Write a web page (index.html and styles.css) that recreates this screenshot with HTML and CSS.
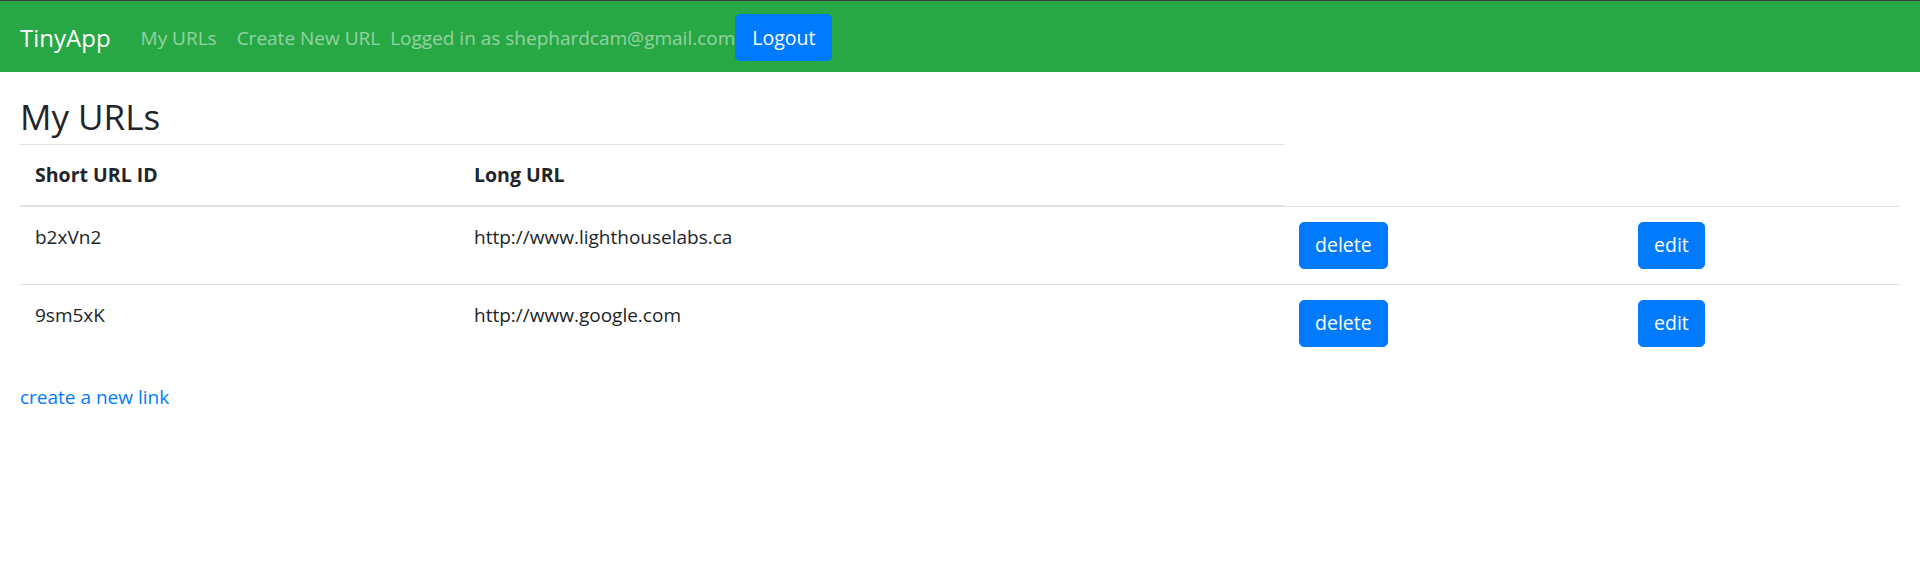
FILE: index.html
```html
<!DOCTYPE html>
<html lang="en">
<head>
<meta charset="utf-8">
<title>TinyApp</title>
<link rel="stylesheet" href="styles.css">
</head>
<body>
<nav class="navbar">
  <a class="brand" href="#">TinyApp</a>
  <div class="nav-links">
    <a class="nav-link" href="#">My URLs</a>
    <a class="nav-link" href="#">Create New URL</a>
  </div>
  <span class="nav-text">Logged in as shephardcam@gmail.com</span>
  <button class="btn">Logout</button>
</nav>
<main class="container">
  <h2 class="title">My URLs</h2>
  <table class="table">
    <colgroup>
      <col class="c1"><col class="c2"><col class="c3"><col class="c4">
    </colgroup>
    <thead>
      <tr><th>Short URL ID</th><th>Long URL</th></tr>
    </thead>
    <tbody>
      <tr>
        <td>b2xVn2</td>
        <td>http://www.lighthouselabs.ca</td>
        <td><button class="btn">delete</button></td>
        <td><button class="btn">edit</button></td>
      </tr>
      <tr>
        <td>9sm5xK</td>
        <td>http://www.google.com</td>
        <td><button class="btn">delete</button></td>
        <td><button class="btn">edit</button></td>
      </tr>
    </tbody>
  </table>
  <a class="link" href="#">create a new link</a>
</main>
</body>
</html>
```
FILE: styles.css
```css
* { box-sizing: border-box; }
html, body { margin: 0; padding: 0; }
body {
  font-family: "Open Sans", "Noto Sans", sans-serif;
  font-size: 19px;
  line-height: 30px;
  color: #212529;
  background: #fff;
  border-top: 1px solid #3a3a3a;
}
.navbar {
  display: flex;
  align-items: center;
  background: #28a745;
  padding: 11px 20px 9px;
  height: 71px;
}
.brand {
  color: #fff;
  text-decoration: none;
  font-size: 24px;
  line-height: 37.5px;
  padding: 6px 0;
  margin-right: 20px;
}
.nav-links { display: flex; }
.nav-link {
  color: rgba(255,255,255,.5);
  text-decoration: none;
  padding: 10px 10px;
}
.nav-text {
  color: rgba(255,255,255,.5);
  padding: 10px 0;
}
.btn {
  font-family: inherit;
  font-size: 19.5px;
  line-height: 30px;
  color: #fff;
  background: #007bff;
  border: 1px solid #007bff;
  border-radius: 5px;
  padding: 7.5px 15px;
  cursor: pointer;
}
.navbar .btn { padding: 7.5px 16px; }
.container { padding: 0 20px; }
.title {
  font-size: 35px;
  font-weight: 500;
  line-height: 42px;
  margin: 0 0 6px;
  padding-top: 24px;
}
.table {
  width: 100%;
  border-collapse: collapse;
  margin-bottom: 20px;
}
.c1 { width: 439px; }
.c2 { width: 825px; }
.c3 { width: 339px; }
.c4 { width: 277px; }
.table th, .table td {
  padding: 15px;
  text-align: left;
  vertical-align: top;
  border-top: 1px solid #dee2e6;
}
.table th {
  font-weight: 700;
  font-size: 19.5px;
  border-bottom: 2.5px solid #dee2e6;
}
.link { color: #007bff; text-decoration: none; }
```
